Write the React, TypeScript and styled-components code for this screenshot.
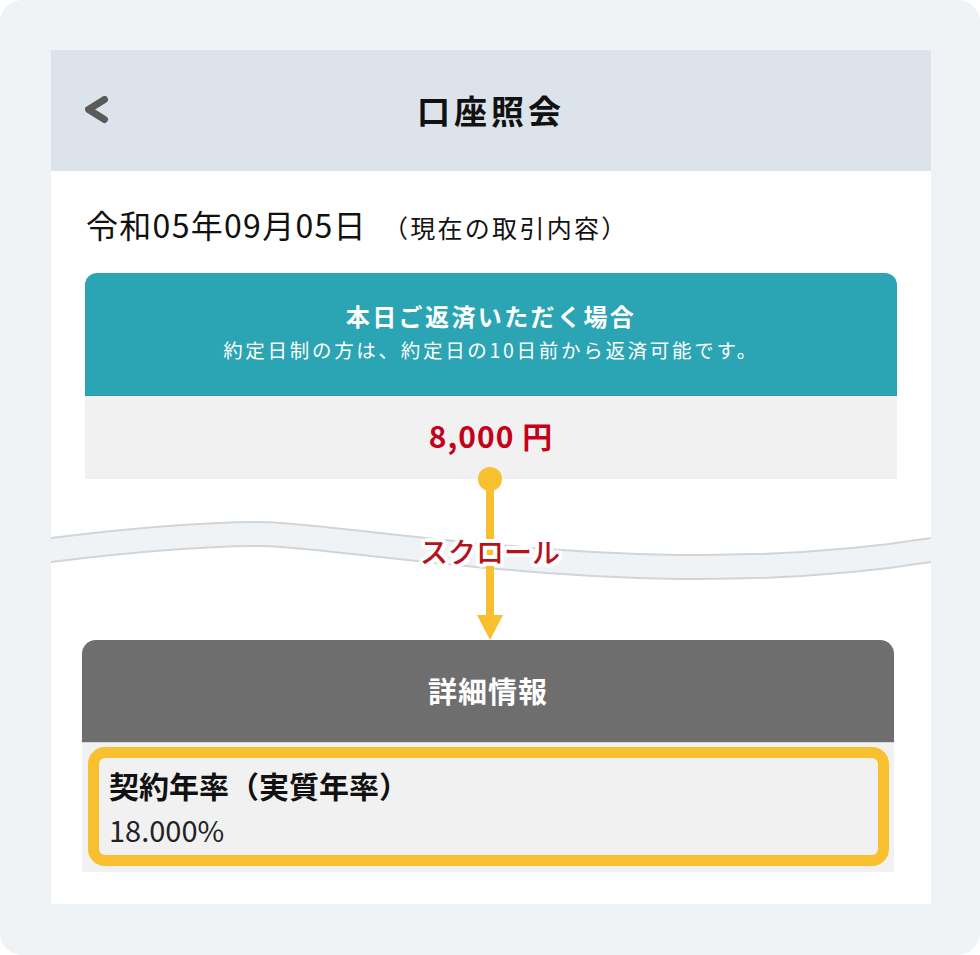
import React from 'react';
import styled, { createGlobalStyle } from 'styled-components';

const GlobalStyle = createGlobalStyle`
  html, body {
    margin: 0;
    padding: 0;
    background: #ffffff;
  }
  body {
    font-family: "Noto Sans CJK JP", "Noto Sans", sans-serif;
    color: #111111;
  }
`;

const COLOR = {
  frame: '#eff3f6',
  header: '#dce3ea',
  teal: '#2ba4b4',
  gray: '#6e6e6e',
  panel: '#f1f1f1',
  red: '#c4001a',
  scrollRed: '#b5121b',
  yellow: '#f8bf2f',
  wave: '#d2d5d8',
};

const detail = {
  label: '契約年率（実質年率）',
  value: '18.000%',
};

const App = () => {
  return (
    <>
      <GlobalStyle />
      <FrameStyle>
        <PhoneStyle>
          <TopBarStyle>
            <BackButton aria-label="戻る">
              <svg width="24" height="28" viewBox="0 0 24 28">
                <path
                  d="M19.5 3.5 L3.5 13.5 L19.5 23.5"
                  fill="none"
                  stroke="#5a5a5a"
                  strokeWidth="7"
                  strokeLinecap="round"
                  strokeLinejoin="round"
                />
              </svg>
            </BackButton>
            <PageTitle>口座照会</PageTitle>
            <span />
          </TopBarStyle>

          <DateRow>
            令和05年09月05日<DateNote>（現在の取引内容）</DateNote>
          </DateRow>

          <Card $mx="22px 34px 0 34px" $radius={12}>
            <CardHead $bg={COLOR.teal} $height={123} $line="#2a98a6">
              <RepayTitle>本日ご返済いただく場合</RepayTitle>
              <RepaySub>約定日制の方は、約定日の10日前から返済可能です。</RepaySub>
            </CardHead>
            <AmountBody>
              <Amount>8,000 円</Amount>
            </AmountBody>
          </Card>

          <ScrollGap>
            <WaveSvg viewBox="0 0 880 75" preserveAspectRatio="none">
              <path
                d="M0 28 C80 18 150 12 209 12 C268 12 460 45 649 45 C760 45 830 36 880 28 L880 52 C830 60 760 69 649 69 C460 69 268 36 209 36 C150 36 80 42 0 52 Z"
                fill={COLOR.frame}
              />
              <path
                d="M0 28 C80 18 150 12 209 12 C268 12 460 45 649 45 C760 45 830 36 880 28"
                fill="none"
                stroke={COLOR.wave}
                strokeWidth="2"
              />
              <path
                d="M0 52 C80 42 150 36 209 36 C268 36 460 69 649 69 C760 69 830 60 880 52"
                fill="none"
                stroke={COLOR.wave}
                strokeWidth="2"
              />
            </WaveSvg>
            <ScrollArrow>
              <ArrowDot />
              <ArrowLine />
              <ArrowHead />
              <ScrollLabel>スクロール</ScrollLabel>
            </ScrollArrow>
          </ScrollGap>

          <Card $mx="0 37px 0 31px" $radius={14}>
            <CardHead $bg={COLOR.gray} $height={103} $line="#d6d6d6">
              <DetailTitle>詳細情報</DetailTitle>
            </CardHead>
            <DetailBody>
              <HighlightBox>
                <DetailLabel>{detail.label}</DetailLabel>
                <DetailValue>{detail.value}</DetailValue>
              </HighlightBox>
            </DetailBody>
          </Card>
        </PhoneStyle>
      </FrameStyle>
    </>
  );
};

export default App;

const FrameStyle = styled.div`
  width: 980px;
  height: 955px;
  box-sizing: border-box;
  padding: 50px 49px 51px 51px;
  background: ${COLOR.frame};
  border-radius: 22px;
`;

const PhoneStyle = styled.div`
  height: 854px;
  background: #ffffff;
  display: flex;
  flex-direction: column;
`;

const TopBarStyle = styled.header`
  height: 121px;
  flex-shrink: 0;
  background: ${COLOR.header};
  display: grid;
  grid-template-columns: 1fr auto 1fr;
  align-items: center;
`;

const BackButton = styled.div`
  display: flex;
  align-items: center;
  padding-left: 34px;
  height: 28px;
  margin-top: -1px;
`;

const PageTitle = styled.h1`
  margin: 0;
  font-size: 33px;
  font-weight: 700;
  letter-spacing: 4px;
  line-height: 1.4;
  color: #111111;
`;

const DateRow = styled.div`
  margin: 29px 0 0 35px;
  font-size: 32px;
  line-height: 48px;
  letter-spacing: 1.3px;
  color: #111111;
  display: flex;
  align-items: baseline;
`;

const DateNote = styled.span`
  margin-left: 16px;
  font-size: 25px;
  letter-spacing: 2.3px;
`;

const Card = styled.section<{ $mx: string; $radius: number }>`
  margin: ${(p) => p.$mx};
  border-radius: ${(p) => p.$radius}px ${(p) => p.$radius}px 0 0;
  overflow: hidden;
  flex-shrink: 0;
`;

const CardHead = styled.div<{ $bg: string; $height: number; $line: string }>`
  height: ${(p) => p.$height}px;
  box-sizing: border-box;
  background: ${(p) => p.$bg};
  border-bottom: 1px solid ${(p) => p.$line};
  display: flex;
  flex-direction: column;
  align-items: center;
  justify-content: center;
  color: #ffffff;
  text-align: center;
`;

const RepayTitle = styled.div`
  font-size: 24px;
  font-weight: 700;
  letter-spacing: 2.4px;
  line-height: 34px;
  margin-top: -5px;
`;

const RepaySub = styled.div`
  font-size: 19.5px;
  letter-spacing: 2.7px;
  line-height: 28px;
  margin-top: 3px;
`;

const AmountBody = styled.div`
  height: 83px;
  background: ${COLOR.panel};
  display: flex;
  align-items: center;
  justify-content: center;
  padding-bottom: 5px;
  box-sizing: border-box;
`;

const Amount = styled.div`
  font-size: 30px;
  font-weight: 700;
  color: ${COLOR.red};
  letter-spacing: 1px;
`;

const ScrollGap = styled.div`
  position: relative;
  height: 161px;
  flex-shrink: 0;
  display: flex;
  flex-direction: column;
`;

const WaveSvg = styled.svg`
  display: block;
  width: 880px;
  height: 75px;
  margin-top: 31px;
`;

const ScrollArrow = styled.div`
  position: absolute;
  top: -12px;
  bottom: 0;
  left: 426px;
  width: 26px;
  display: flex;
  flex-direction: column;
  align-items: center;
`;

const ArrowDot = styled.div`
  width: 24px;
  height: 24px;
  border-radius: 50%;
  background: ${COLOR.yellow};
  flex-shrink: 0;
`;

const ArrowLine = styled.div`
  width: 8px;
  flex: 1;
  margin-top: -2px;
  background: ${COLOR.yellow};
`;

const ArrowHead = styled.div`
  width: 0;
  height: 0;
  border-left: 13px solid transparent;
  border-right: 13px solid transparent;
  border-top: 25px solid ${COLOR.yellow};
  flex-shrink: 0;
`;

const ScrollLabel = styled.div`
  position: absolute;
  top: 64px;
  left: 50%;
  transform: translateX(-50%);
  white-space: nowrap;
  font-size: 28px;
  font-weight: 500;
  line-height: 40px;
  color: ${COLOR.scrollRed};
  text-shadow:
    3px 0 0 #fff, -3px 0 0 #fff, 0 3px 0 #fff, 0 -3px 0 #fff,
    2px 2px 0 #fff, -2px 2px 0 #fff, 2px -2px 0 #fff, -2px -2px 0 #fff,
    4px 0 0 #fff, -4px 0 0 #fff, 0 4px 0 #fff, 0 -4px 0 #fff,
    3px 3px 0 #fff, -3px 3px 0 #fff, 3px -3px 0 #fff, -3px -3px 0 #fff;
`;

const DetailTitle = styled.div`
  font-size: 29px;
  font-weight: 700;
  letter-spacing: 1px;
  line-height: 40px;
  margin-top: -2px;
`;

const DetailBody = styled.div`
  background: ${COLOR.panel};
  padding: 4px 5px 6px 6px;
`;

const HighlightBox = styled.div`
  border: 11px solid ${COLOR.yellow};
  border-radius: 17px;
  padding: 4px 10px 0 10px;
  height: 119px;
  box-sizing: border-box;
`;

const DetailLabel = styled.div`
  font-size: 30px;
  font-weight: 700;
  line-height: 46px;
  color: #111111;
`;

const DetailValue = styled.div`
  font-size: 29px;
  font-weight: 400;
  line-height: 42px;
  color: #222222;
`;
